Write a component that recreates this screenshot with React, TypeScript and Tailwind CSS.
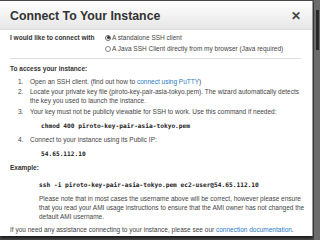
import React from "react";

export default function App() {
  const sans = { fontFamily: '"Liberation Sans", Arial, sans-serif' };
  const mono = { fontFamily: '"DejaVu Sans Mono", "Liberation Mono", monospace' };
  return (
    <div className="w-[320px] h-[240px] bg-[#4a4a4a] overflow-hidden relative" style={sans}>
      <div className="absolute right-0 top-0 w-[6px] h-[240px] bg-[#6b6b6b]">
        <div className="ml-[2px] mt-[10px] w-[3px] h-[40px] bg-[#2a2a2a]" />
      </div>
      <div className="w-[313px] h-[235px] mt-[1px] bg-white border-r border-[#999] flex flex-col shadow-[0_2px_3px_rgba(0,0,0,0.7)] overflow-hidden">
        <div className="shrink-0 h-[29px] border-b border-[#ddd] bg-gradient-to-b from-white to-[#e6e6e6] flex items-center justify-between pl-[10px] pr-[11px]">
          <span className="text-[12.3px] font-bold text-[#333] pt-[2px]">Connect To Your Instance</span>
          <span className="text-[12px] font-bold text-[#444] pt-[2px]">✕</span>
        </div>
        <div className="shrink-0 px-[10px] text-[6.5px] text-[#444] leading-[9px] whitespace-nowrap">
          <div className="flex pt-[3px] pb-[5px] border-b border-[#ddd] mr-[1px]">
            <div className="w-[95px] font-bold text-[#333]">I would like to connect with</div>
            <div className="flex flex-col gap-[2px]">
              <div className="flex items-center gap-[1px] h-[9px]">
                <span className="w-[6px] h-[6px] rounded-full border border-[#666] flex items-center justify-center">
                  <span className="w-[3px] h-[3px] rounded-full bg-[#333]" />
                </span>
                <span>A standalone SSH client</span>
              </div>
              <div className="flex items-center gap-[1px] h-[9px]">
                <span className="w-[6px] h-[6px] rounded-full border border-[#888]" />
                <span>A Java SSH Client directly from my browser (Java required)</span>
              </div>
            </div>
          </div>
          <div className="font-bold text-[#333] mt-[5px]">To access your instance:</div>
          <div className="mt-[4px] pl-[8px] flex flex-col">
            <div className="flex">
              <span className="w-[12px]">1.</span>
              <span>Open an SSH client. (find out how to <span className="text-[#2a7bc1]">connect using PuTTY</span>)</span>
            </div>
            <div className="flex mt-[1px]">
              <span className="w-[12px]">2.</span>
              <span>Locate your private key file (piroto-key-pair-asia-tokyo.pem). The wizard automatically detects<br />the key you used to launch the instance.</span>
            </div>
            <div className="flex mt-[2px]">
              <span className="w-[12px]">3.</span>
              <span>Your key must not be publicly viewable for SSH to work. Use this command if needed:</span>
            </div>
            <div className="pl-[23px] mt-[5px] font-bold text-[#222] text-[6.2px]" style={mono}>chmod 400 piroto-key-pair-asia-tokyo.pem</div>
            <div className="flex mt-[5px]">
              <span className="w-[12px]">4.</span>
              <span>Connect to your instance using its Public IP:</span>
            </div>
            <div className="pl-[23px] mt-[5px] font-bold text-[#222] text-[6.2px]" style={mono}>54.65.112.10</div>
          </div>
          <div className="font-bold text-[#333] mt-[5px]">Example:</div>
          <div className="pl-[29px] mt-[8px] font-bold text-[#222] text-[6.2px]" style={mono}>ssh -i piroto-key-pair-asia-tokyo.pem ec2-user@54.65.112.10</div>
          <div className="pl-[29px] mt-[5px]">
            Please note that in most cases the username above will be correct, however please ensure<br />
            that you read your AMI usage instructions to ensure that the AMI owner has not changed the<br />
            default AMI username.
          </div>
          <div className="mt-[4px]">If you need any assistance connecting to your instance, please see our <span className="text-[#2a7bc1]">connection documentation</span>.</div>
        </div>
      </div>
    </div>
  );
}
